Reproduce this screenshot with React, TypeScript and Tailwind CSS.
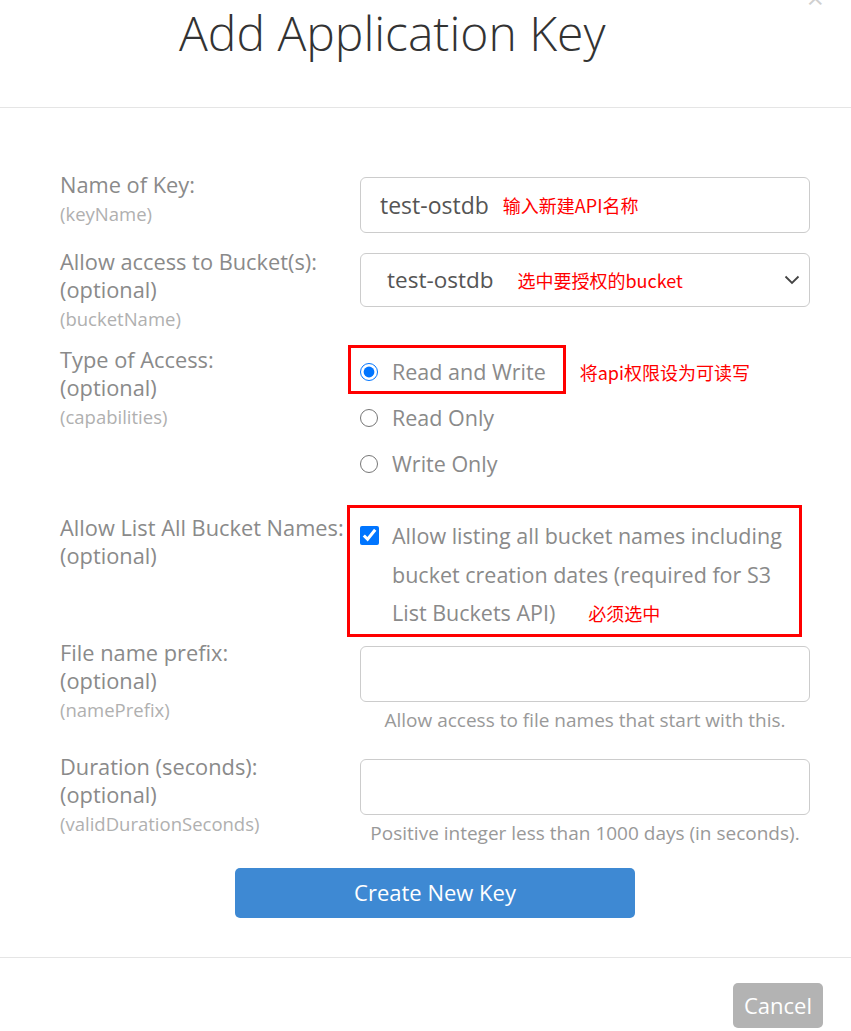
import React from 'react';

const cn = "font-['Noto_Sans_CJK_SC',sans-serif]";

function Label({ title, optional, field }: { title: string; optional?: boolean; field: string }) {
  return (
    <div className="whitespace-nowrap">
      <div className="text-[21.8px] leading-[28px] text-[#8a8a8a]">{title}</div>
      {optional && <div className="text-[21.8px] leading-[28px] text-[#8a8a8a]">(optional)</div>}
      <div className="text-[18.5px] leading-[29px] text-[#b0b0b0]">{field}</div>
    </div>
  );
}

function Radio({ label, checked }: { label: string; checked?: boolean }) {
  return (
    <label className="flex h-[46px] items-center gap-[14px] text-[21.5px] text-[#8a8a8a]">
      <input type="radio" name="cap" defaultChecked={checked} className="m-0 h-[18px] w-[18px]" />
      <span>{label}</span>
    </label>
  );
}

export default function App() {
  return (
    <div className="relative h-[1031px] w-[851px] overflow-hidden bg-white font-['Open_Sans',sans-serif]">
      <button className="absolute right-[27px] top-[-17px] text-[30px] leading-[30px] text-[#cfcfcf]">×</button>

      <div className="h-[108px] border-b border-[#e5e5e5] pl-[179px] pt-[3px]">
        <h1 className="text-[48px] font-light leading-[60px] text-[#333]">Add Application Key</h1>
      </div>

      <div className="pl-[60px] pt-[63px]">
        <div className="grid grid-cols-[300px_450px]">
          <Label title="Name of Key:" field="(keyName)" />
          <div className="mt-[6px] flex h-[56px] items-center rounded-[6px] border border-[#cccccc] px-[19px]">
            <span className="text-[23px] text-[#555]">test-ostdb</span>
            <span className={`ml-[14px] text-[18px] text-[#ff0000] ${cn}`}>输入新建API名称</span>
          </div>
        </div>

        <div className="mt-[15px] grid grid-cols-[300px_450px]">
          <Label title="Allow access to Bucket(s):" optional field="(bucketName)" />
          <div className="mt-[5px] flex h-[54px] items-center rounded-[6px] border border-[#cccccc] pl-[26px] pr-[9px]">
            <span className="text-[22.5px] text-[#555]">test-ostdb</span>
            <span className={`ml-[24px] text-[18px] text-[#ff0000] ${cn}`}>选中要授权的bucket</span>
            <svg className="ml-auto" width="16" height="10" viewBox="0 0 16 10">
              <polyline points="1.5,1.5 8,8 14.5,1.5" fill="none" stroke="#444" strokeWidth="1.8" />
            </svg>
          </div>
        </div>

        <div className="mt-[13px] grid grid-cols-[300px_450px]">
          <Label title="Type of Access:" optional field="(capabilities)" />
          <div className="mt-[3px]">
            <div className="relative flex items-center">
              <div className="pointer-events-none absolute left-[-12px] top-[-4px] h-[49px] w-[218px] border-[3px] border-[#ff0000]" />
              <Radio label="Read and Write" checked />
              <span className={`ml-[34px] text-[18px] text-[#ff0000] ${cn}`}>将api权限设为可读写</span>
            </div>
            <Radio label="Read Only" />
            <Radio label="Write Only" />
          </div>
        </div>

        <div className="mt-[27px] grid grid-cols-[300px_450px]">
          <div className="whitespace-nowrap">
            <div className="text-[21.8px] leading-[28px] text-[#8a8a8a]">Allow List All Bucket Names:</div>
            <div className="text-[21.8px] leading-[28px] text-[#8a8a8a]">(optional)</div>
          </div>
          <div className="relative mt-[3px] flex gap-[13px]">
            <div className="pointer-events-none absolute left-[-13px] top-[-12px] h-[132px] w-[455px] border-[3px] border-[#ff0000]" />
            <input type="checkbox" defaultChecked className="m-0 mt-[9px] h-[19px] w-[19px] shrink-0" />
            <div className="whitespace-nowrap text-[21.5px] leading-[38.5px] text-[#8a8a8a]">
              Allow listing all bucket names including
              <br />
              bucket creation dates (required for S3
              <br />
              List Buckets API)
              <span className={`ml-[33px] text-[18px] text-[#ff0000] ${cn}`}>必须选中</span>
            </div>
          </div>
        </div>

        <div className="mt-[6px] grid grid-cols-[300px_450px]">
          <Label title="File name prefix:" optional field="(namePrefix)" />
          <div className="mt-[7px]">
            <div className="h-[56px] rounded-[6px] border border-[#cccccc]" />
            <div className="mt-[6px] whitespace-nowrap text-center text-[19px] leading-[24px] text-[#999]">
              Allow access to file names that start with this.
            </div>
          </div>
        </div>

        <div className="mt-[21px] grid grid-cols-[300px_450px]">
          <Label title="Duration (seconds):" optional field="(validDurationSeconds)" />
          <div className="mt-[6px]">
            <div className="h-[56px] rounded-[6px] border border-[#cccccc]" />
            <div className="mt-[6px] whitespace-nowrap text-center text-[19px] leading-[24px] text-[#999]">
              Positive integer less than 1000 days (in seconds).
            </div>
          </div>
        </div>

        <button className="ml-[175px] mt-[23px] h-[50px] w-[400px] rounded-[5px] bg-[#3e89d3] text-[22px] text-white">
          Create New Key
        </button>
      </div>

      <div className="mt-[39px] flex justify-end border-t border-[#e5e5e5] pr-[28px] pt-[25px]">
        <button className="h-[45px] w-[90px] rounded-[5px] bg-[#b3b3b3] text-[22px] text-white">Cancel</button>
      </div>
    </div>
  );
}
